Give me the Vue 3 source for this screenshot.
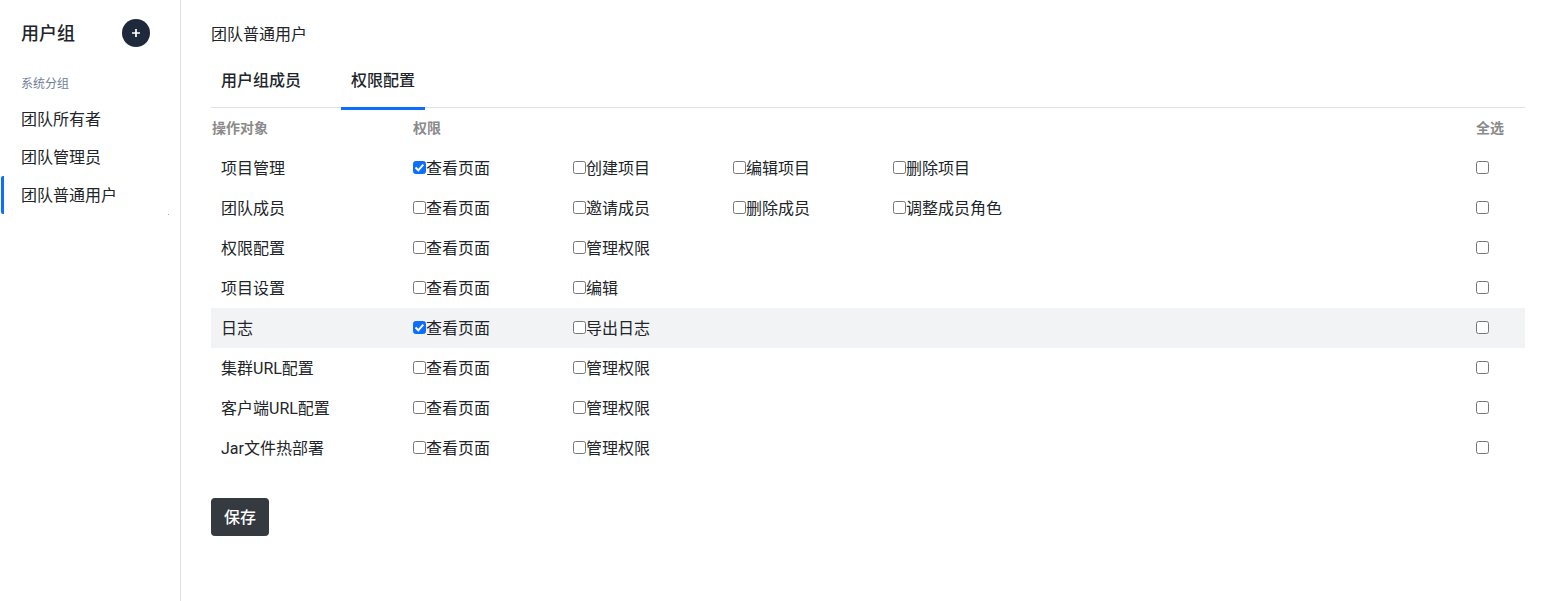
<script setup>
const rows = [
  { name: '项目管理', perms: [['查看页面', true], ['创建项目'], ['编辑项目'], ['删除项目']] },
  { name: '团队成员', perms: [['查看页面'], ['邀请成员'], ['删除成员'], ['调整成员角色']] },
  { name: '权限配置', perms: [['查看页面'], ['管理权限']] },
  { name: '项目设置', perms: [['查看页面'], ['编辑']] },
  { name: '日志', perms: [['查看页面', true], ['导出日志']], hover: true },
  { name: '集群URL配置', perms: [['查看页面'], ['管理权限']] },
  { name: '客户端URL配置', perms: [['查看页面'], ['管理权限']] },
  { name: 'Jar文件热部署', perms: [['查看页面'], ['管理权限']] },
]
const groups = ['团队所有者', '团队管理员', '团队普通用户']
</script>

<template>
  <div class="page">
    <aside class="side">
      <div class="side-head">
        <span class="side-title">用户组</span>
        <span class="add">
          <svg width="10" height="10" viewBox="0 0 10 10"><path d="M5 1v8M1 5h8" stroke="#fff" stroke-width="1.7" fill="none" /></svg>
        </span>
      </div>
      <div class="side-label">系统分组</div>
      <ul class="side-list">
        <li v-for="(g, i) in groups" :key="g" class="side-item" :class="{ active: i === 2 }">{{ g }}</li>
      </ul>
    </aside>
    <main class="main">
      <div class="crumb">团队普通用户</div>
      <div class="tabs">
        <div class="tab">用户组成员</div>
        <div class="tab current">权限配置</div>
      </div>
      <div class="row head">
        <div class="col-name">操作对象</div>
        <div class="col-perm">权限</div>
        <div class="col-all">全选</div>
      </div>
      <div v-for="r in rows" :key="r.name" class="row body" :class="{ hover: r.hover }">
        <div class="col-name">{{ r.name }}</div>
        <div class="col-perm">
          <label v-for="p in r.perms" :key="p[0]" class="perm">
            <input type="checkbox" :checked="p[1]" /><span>{{ p[0] }}</span>
          </label>
        </div>
        <div class="col-all"><input type="checkbox" /></div>
      </div>
      <button class="save">保存</button>
    </main>
  </div>
</template>

<style>
html, body { margin: 0; background: #fff; }
</style>

<style scoped>
.page {
  display: flex;
  height: 601px;
  overflow: hidden;
  font-family: Roboto, "Noto Sans CJK SC", sans-serif;
  font-size: 16px;
  color: #212529;
}
.side {
  width: 180px;
  flex: none;
  border-right: 1px solid #d9dfe8;
}
.side-head {
  display: flex;
  align-items: center;
  justify-content: space-between;
  height: 28px;
  margin-top: 19px;
  padding: 0 30px 0 21px;
}
.side-title { font-size: 18px; font-weight: 500; line-height: 26px; padding-top: 2px; }
.add {
  width: 28px;
  height: 28px;
  border-radius: 50%;
  background: #1e293b;
  display: flex;
  align-items: center;
  justify-content: center;
}
.side-label {
  margin-top: 22px;
  padding-left: 21px;
  font-size: 12px;
  line-height: 31px;
  color: #718096;
}
.side-list { list-style: none; margin: 0; padding: 0; }
.side-item {
  height: 38px;
  line-height: 40px;
  padding-left: 21px;
  position: relative;
}
.side-item.active::before {
  content: "";
  position: absolute;
  left: 1px;
  top: 0;
  bottom: 0;
  width: 3px;
  border-radius: 2px 0 0 2px;
  background: #0d6efd;
}
.side-item.active::after {
  content: "";
  position: absolute;
  left: 168px;
  bottom: -1px;
  width: 1px;
  height: 1px;
  background: #7fb0fa;
}
.main { flex: 1; padding: 0 25px 0 30px; min-width: 0; }
.crumb { margin-top: 25px; line-height: 20px; }
.tabs {
  display: flex;
  gap: 30px;
  margin-top: 13px;
  height: 50px;
  border-bottom: 1px solid #dee2e6;
  box-sizing: border-box;
}
.tab {
  padding: 0 10px;
  height: 52px;
  line-height: 46px;
  font-weight: 500;
  box-sizing: border-box;
}
.tab.current { border-bottom: 3px solid #0d6efd; }
.row { display: flex; align-items: center; height: 40px; padding-bottom: 2px; box-sizing: border-box; }
.col-name { width: 202px; flex: none; padding-left: 10px; box-sizing: border-box; }
.col-perm { flex: 1; display: flex; }
.col-all { width: 49px; flex: none; display: flex; }
.head { font-size: 14px; font-weight: 700; color: #8a8a8a; padding-bottom: 3px; }
.head .col-name { padding-left: 1px; }
.perm { width: 160px; display: flex; align-items: center; }
input[type="checkbox"] {
  appearance: none;
  margin: 0;
  width: 13px;
  height: 13px;
  flex: none;
  box-sizing: border-box;
  background: #fff;
  border: 1px solid #767676;
  border-radius: 2.5px;
}
input[type="checkbox"]:checked {
  border-color: #0d6efd;
  background: #0d6efd url("data:image/svg+xml,%3Csvg xmlns='http://www.w3.org/2000/svg' viewBox='0 0 13 13'%3E%3Cpath d='M2.5 6.5l2.8 2.8 5-5.6' fill='none' stroke='%23fff' stroke-width='2'/%3E%3C/svg%3E") center / 13px 13px no-repeat;
}
.hover { background: #f2f3f5; }
.save {
  display: block;
  margin-top: 30px;
  width: 58px;
  height: 38px;
  padding: 0 0 2px;
  border: 0;
  border-radius: 4px;
  background: #343a40;
  color: #fff;
  font: inherit;
  font-weight: 500;
}
</style>
